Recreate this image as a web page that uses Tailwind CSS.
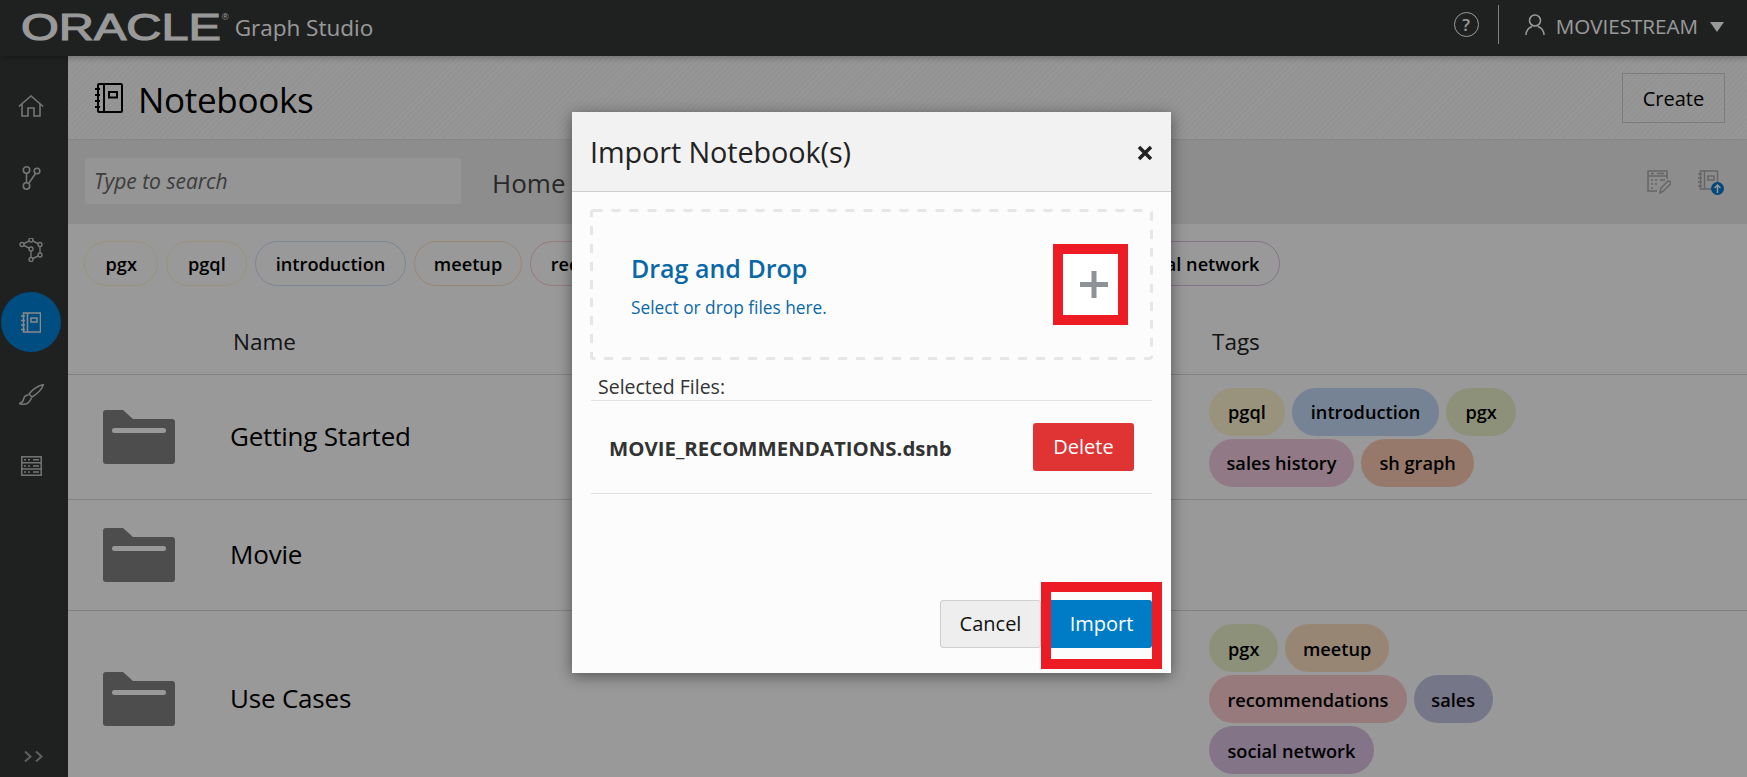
<!DOCTYPE html>
<html lang="en">
<head>
  <meta charset="UTF-8" />
  <title>Graph Studio - Notebooks</title>
  <script src="https://cdn.jsdelivr.net/npm/@tailwindcss/browser@4"></script>
</head>
<body class="relative h-[777px] w-[1747px] overflow-hidden bg-white font-['Open_Sans',sans-serif] text-black">
  <!-- top bar -->
  <header class="relative z-10 flex h-14 items-center bg-[#343737] pl-[21px] pr-[23px] text-white shadow-[0_2px_6px_rgba(0,0,0,0.25)]">
    <div class="w-[201px]">
      <span class="inline-block origin-left scale-x-[1.35] font-['Liberation_Sans',sans-serif] text-[36px] font-normal leading-none [-webkit-text-stroke:1.1px_white]">ORACLE</span>
    </div>
    <span class="mb-[22px] font-['Liberation_Sans',sans-serif] text-[9px] leading-none">®</span>
    <span class="ml-[6px] text-[22.5px] leading-none">Graph Studio</span>
    <div class="ml-auto mb-[7px] flex items-center">
      <span class="flex h-[25px] w-[25px] items-center justify-center rounded-full border-[1.5px] border-white text-[17px] font-semibold leading-none">?</span>
      <span class="ml-[19px] h-[39px] w-px bg-white/80"></span>
      <svg class="ml-[26px]" width="20" height="21" viewBox="0 0 20 21" fill="none" stroke="#fff" stroke-width="1.6"><circle cx="10" cy="6.5" r="5.5"/><path d="M1 21c0-5 2.500-7 6-8.500M19 21c0-5-2.500-7-6-8.500"/></svg>
      <span class="ml-[11px] mt-[3px] text-[20.6px] leading-none">MOVIESTREAM</span>
      <svg class="ml-[12px] mt-[5px]" width="14" height="10" viewBox="0 0 14 10" fill="#fff"><path d="M0 0H14L7 10Z"/></svg>
    </div>
  </header>

  <div class="flex h-[721px]">
    <!-- side nav -->
    <nav class="flex w-[68px] shrink-0 flex-col items-center bg-[#343737] pt-[14px]">
      <div class="flex h-[72px] w-full items-center justify-center pr-[6px]">
        <svg width="26" height="22" viewBox="0 0 26 22" fill="none" stroke="#c4c4c4" stroke-width="1.600"><path d="M.8 11.500 13 1l12.200 10.500M4 9v12h6v-8h6v8h6V9"/></svg>
      </div>
      <div class="flex h-[72px] w-full items-center justify-center pr-[6px]">
        <svg width="19" height="24" viewBox="0 0 19 24" fill="none" stroke="#c4c4c4" stroke-width="1.600"><circle cx="4.500" cy="4" r="3.200"/><circle cx="15" cy="5" r="2.800"/><circle cx="4.500" cy="20" r="3.200"/><path d="M4.500 7.200v9.600M13.500 7.500 7 17"/></svg>
      </div>
      <div class="flex h-[72px] w-full items-center justify-center pr-[6px]">
        <svg width="24" height="24" viewBox="0 0 24 24" fill="none" stroke="#c4c4c4" stroke-width="1.400"><path d="M3 6.500 12 2l9 4.500V17l-9 4.500V11Z"/><circle cx="3" cy="6.500" r="2" fill="#343737"/><circle cx="12" cy="2" r="2" fill="#343737"/><circle cx="21" cy="6.500" r="2" fill="#343737"/><circle cx="21" cy="17" r="2" fill="#343737"/><circle cx="12" cy="21.500" r="2" fill="#343737"/><circle cx="12" cy="11" r="2" fill="#343737"/></svg>
      </div>
      <div class="flex h-[72px] w-full items-center justify-center pr-[6px]">
        <div class="flex h-[60px] w-[60px] items-center justify-center rounded-full bg-[#0082d8]">
          <svg width="20" height="21" viewBox="0 0 20 21" fill="none" stroke="#e4e4e4" stroke-width="1.500"><rect x="2.500" y="1" width="17" height="19"/><path d="M6.500 1v19"/><rect x="10" y="6" width="6" height="4"/><path d="M0 4h4M0 8.500h4M0 13h4M0 17.500h4"/></svg>
        </div>
      </div>
      <div class="flex h-[72px] w-full items-center justify-center pr-[6px]">
        <svg width="25" height="21" viewBox="0 0 25 21" fill="none" stroke="#c4c4c4" stroke-width="1.500"><path d="M24.500.5C19 2 13 6 10 10l3 3c5-3 10-8 11.500-12.500Z"/><path d="M9.500 11C6 11 5 13 4.500 15.500 4 18 2 19 .5 19.500c2.500 1.500 7.500 1 9.500-1.500 1.500-2 2.500-3.500 2.500-4.500"/></svg>
      </div>
      <div class="flex h-[72px] w-full items-center justify-center pr-[6px]">
        <svg width="21" height="20" viewBox="0 0 21 20" fill="none" stroke="#c4c4c4" stroke-width="1.500"><rect x=".8" y=".8" width="19.400" height="18.400"/><path d="M.8 6.800h19.400M.8 13h19.400M3 3.800h2M7 3.800h2M12 3.800h6M3 10h2M7 10h2M12 10h6M3 16h2M7 16h2M12 16h6"/></svg>
      </div>
      <svg class="mt-auto mb-[15px] mr-[1px]" width="19" height="11" viewBox="0 0 19 11" fill="none" stroke="#a0a0a0" stroke-width="2"><path d="M1 .5 6.500 5.500 1 10.500M12 .5l5.500 5-5.500 5"/></svg>
    </nav>

    <main class="min-w-0 flex-1">
      <!-- page title -->
      <div class="flex h-[84px] items-center border-b border-[#e0e0e0] bg-[repeating-linear-gradient(135deg,#fbfbfb_0,#fbfbfb_2px,#f5f5f5_2px,#f5f5f5_4px)] pl-[27px] pr-[22px]">
        <svg width="28" height="30" viewBox="0 0 28 30" fill="none" stroke="#000" stroke-width="2"><rect x="3" y="1" width="24" height="28" rx="1"/><path d="M9 1v28"/><rect x="14" y="9" width="8" height="5.500"/><path d="M0 6h5M0 12h5M0 18h5M0 24h5"/></svg>
        <h1 class="ml-[15px] mt-[4px] text-[35px] font-normal leading-none tracking-[-0.3px]">Notebooks</h1>
        <button class="ml-auto h-[50px] w-[103px] border border-[#cfcfcf] pt-[2px] text-[20px]">Create</button>
      </div>

      <!-- search band -->
      <div class="flex h-[84px] items-center bg-[#ebebeb] pl-[17px] pr-[23px]">
        <div class="mb-[2px] flex h-[46px] w-[376px] items-center rounded-[2px] bg-[#f8f8f8] px-[9px] pt-[2px] text-[21px] italic text-[#666]">Type to search</div>
        <span class="ml-[31px] mt-[3px] text-[26px] text-[#444]">Home</span>
        <svg class="ml-auto" width="24" height="24" viewBox="0 0 24 24" fill="none" stroke="#aaa" stroke-width="1.500"><path d="M20 9V1H1v20h9"/><path d="M1 6h19M4 3.500h3M10 3.500h7M4 10h2M8 10h2M4 14h2M8 14h2M4 18h2M13 10h5"/><path d="M13 23l1-5 7-7c2 0 3 1 2.500 3l-7 7Z"/></svg>
        <svg class="ml-[27px]" width="26" height="25" viewBox="0 0 26 25"><g fill="none" stroke="#aaa" stroke-width="1.500"><rect x="2.500" y="1" width="17" height="18"/><path d="M6.500 1v18"/><rect x="10" y="6" width="6" height="4"/><path d="M0 4h4M0 8h4M0 12h4M0 16h4"/></g><circle cx="19.500" cy="18.500" r="6.500" fill="#0078d0"/><path d="M19.500 23v-8M16.500 18l3-3 3 3" fill="none" stroke="#fff" stroke-width="1.500"/></svg>
      </div>

      <!-- tag filter: the middle tags sit behind the dialog -->
      <div class="flex w-[1212px] gap-2 whitespace-nowrap pl-4 pt-[17px] text-[18.2px] font-semibold">
        <span class="flex h-[45px] items-center rounded-full border border-[#fff3d0] px-[20.500px] pt-[2px]">pgx</span>
        <span class="flex h-[45px] items-center rounded-full border border-[#fff3d0] px-[20.500px] pt-[2px]">pgql</span>
        <span class="flex h-[45px] items-center rounded-full border border-[#cfe0f5] px-[19.500px] pt-[2px]">introduction</span>
        <span class="flex h-[45px] items-center rounded-full border border-[#fcdfc1] px-[19px] pt-[2px]">meetup</span>
        <span class="flex h-[45px] items-center rounded-full border border-[#fccbcd] px-[19.500px] pt-[2px]">recommendations</span>
        <span class="ml-auto flex h-[45px] items-center rounded-full border border-[#dcc1e3] px-[19.500px] pt-[2px]">social network</span>
      </div>

      <!-- table -->
      <div class="mt-[1px] grid h-[88px] grid-cols-[163px_978px_1fr] items-end border-b border-[#d8d8d8] pb-[16px] text-[22.5px] leading-8 text-[#222]">
        <span></span>
        <span class="pl-[2px]">Name</span>
        <span class="pl-[3px]">Tags</span>
      </div>

      <div class="grid h-[125px] grid-cols-[163px_978px_1fr] items-center border-b border-[#d8d8d8]">
        <svg class="ml-[35px]" width="72" height="54" viewBox="0 0 72 54"><path d="M3 0h17l10 9h39a3 3 0 0 1 3 3v39a3 3 0 0 1-3 3H3a3 3 0 0 1-3-3V3a3 3 0 0 1 3-3Z" fill="#808080"/><rect x="9" y="18" width="54" height="5" rx="2.500" fill="#fff"/></svg>
        <span class="-ml-px mb-[2px] text-[26px] tracking-[-0.2px]">Getting Started</span>
        <div class="flex w-[320px] flex-wrap gap-x-[7px] gap-y-[3px] text-[18.2px] font-semibold">
          <span class="flex h-12 items-center rounded-full bg-[#fff3d0] px-[19px] pt-[3px]">pgql</span>
          <span class="flex h-12 items-center rounded-full bg-[#c3daf8] px-[19px] pt-[3px]">introduction</span>
          <span class="flex h-12 items-center rounded-full bg-[#edf2cb] px-[19px] pt-[3px]">pgx</span>
          <span class="flex h-12 items-center rounded-full bg-[#f2cbde] px-[17.500px] pt-[3px]">sales history</span>
          <span class="flex h-12 items-center rounded-full bg-[#fccab2] px-[18.500px] pt-[3px]">sh graph</span>
        </div>
      </div>

      <div class="grid h-[111px] grid-cols-[163px_978px_1fr] items-center border-b border-[#d8d8d8]">
        <svg class="ml-[35px]" width="72" height="54" viewBox="0 0 72 54"><path d="M3 0h17l10 9h39a3 3 0 0 1 3 3v39a3 3 0 0 1-3 3H3a3 3 0 0 1-3-3V3a3 3 0 0 1 3-3Z" fill="#808080"/><rect x="9" y="18" width="54" height="5" rx="2.500" fill="#fff"/></svg>
        <span class="-ml-px mb-[2px] text-[26px] tracking-[-0.2px]">Movie</span>
        <span></span>
      </div>

      <div class="grid h-[176px] grid-cols-[163px_978px_1fr] items-center">
        <svg class="ml-[35px]" width="72" height="54" viewBox="0 0 72 54"><path d="M3 0h17l10 9h39a3 3 0 0 1 3 3v39a3 3 0 0 1-3 3H3a3 3 0 0 1-3-3V3a3 3 0 0 1 3-3Z" fill="#808080"/><rect x="9" y="18" width="54" height="5" rx="2.500" fill="#fff"/></svg>
        <span class="-ml-px mb-[2px] text-[26px] tracking-[-0.2px]">Use Cases</span>
        <div class="flex w-[320px] flex-wrap gap-x-[7px] gap-y-[3px] text-[18.2px] font-semibold">
          <span class="flex h-12 items-center rounded-full bg-[#edf2cb] px-[19px] pt-[3px]">pgx</span>
          <span class="flex h-12 items-center rounded-full bg-[#fcdfc1] px-[17.500px] pt-[3px]">meetup</span>
          <span class="flex h-12 items-center rounded-full bg-[#fccbcd] px-[18.500px] pt-[3px]">recommendations</span>
          <span class="flex h-12 items-center rounded-full bg-[#c5c5e4] px-[17.500px] pt-[3px]">sales</span>
          <span class="flex h-12 items-center rounded-full bg-[#dcc1e3] px-[18.500px] pt-[3px]">social network</span>
        </div>
      </div>
    </main>
  </div>

  <!-- dim layer -->
  <div class="absolute inset-0 z-20 bg-black/40"></div>

  <!-- import dialog -->
  <section class="absolute left-[572px] top-[112px] z-30 flex h-[561px] w-[599px] flex-col bg-[#fcfcfc] shadow-[0_3px_14px_rgba(0,0,0,0.45)]">
    <div class="flex h-[80px] shrink-0 items-center justify-between border-b border-[#cfcfcf] bg-[#f2f2f2] pl-[18px] pr-[18px]">
      <h2 class="mt-[2px] text-[28.8px] font-normal leading-none tracking-[-0.1px] text-[#222]">Import Notebook(s)</h2>
      <svg class="mt-[3px]" width="16" height="16" viewBox="0 0 16 16" stroke="#222" stroke-width="3.500"><path d="M2 2l12 12M14 2 2 14"/></svg>
    </div>
    <div class="relative mx-[19px] mt-[19px] flex h-[149px] shrink-0 items-center justify-between pl-[40px] pr-[24px]">
      <svg class="absolute -left-[1px] -top-[2px]" width="563" height="151" fill="none" stroke="#e6e6e6" stroke-width="3" stroke-dasharray="9 9"><rect x="1.500" y="1.500" width="560" height="148" rx="2"/></svg>
      <div class="pt-[1px]">
        <div class="text-[25px] font-semibold leading-[34px] text-[#0a68a8]">Drag and Drop</div>
        <div class="mt-[10px] text-[17.300px] leading-[26px] text-[#0a68a8]">Select or drop files here.</div>
      </div>
      <div class="mb-[2px] flex h-[81px] w-[75px] items-center justify-center border-[10px] border-[#ed1c24] bg-white pl-[7px]">
        <svg width="28" height="27" viewBox="0 0 28 27" fill="#8e9296"><path d="M11.500 0h5v11h11.500v5H16.500V27h-5V16H0v-5h11.500Z"/></svg>
      </div>
    </div>
    <div class="mx-[19px] mt-[15px] border-b border-[#e2e2e2] pb-[1px] pl-[7px] text-[19.500px] leading-6 text-[#333]">Selected Files:</div>
    <div class="mx-[19px] flex h-[93px] shrink-0 items-center justify-between border-b border-[#e2e2e2] pl-[18px] pr-[18px]">
      <span class="mt-[3px] text-[20.400px] font-bold text-[#333]">MOVIE_RECOMMENDATIONS.dsnb</span>
      <button class="h-12 w-[101px] rounded-[3px] bg-[#e03434] text-[20px] text-white">Delete</button>
    </div>
    <div class="mt-auto mb-[25px] mr-[19px] flex justify-end">
      <button class="h-12 w-[101px] rounded-[3px] border border-[#cfcfcf] bg-[#eeeeee] text-[20px] text-[#111]">Cancel</button>
      <button class="ml-[10px] h-12 w-[101px] rounded-r-[3px] bg-[#007cc7] text-[20px] text-white">Import</button>
    </div>
    <!-- red annotation round the Import button -->
    <div class="absolute left-[469px] top-[470px] h-[87px] w-[121px] border-[10px] border-[#ed1c24]"></div>
  </section>
</body>
</html>
